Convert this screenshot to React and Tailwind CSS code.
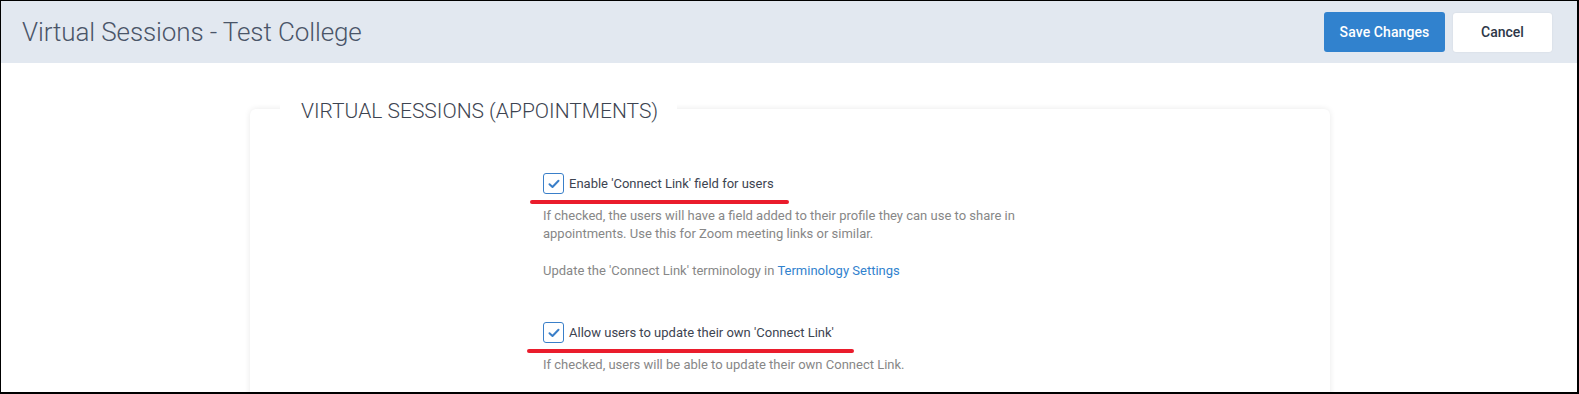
import React from 'react';

function CheckBox() {
  return (
    <span className="flex h-[21px] w-[21px] shrink-0 items-center justify-center rounded-[3px] border border-[#3a7fc9] bg-white">
      <svg width="12" height="10" viewBox="0 0 12 10" fill="none">
        <path d="M1.5 5.2 L4.5 8 L10.5 1.8" stroke="#3a7fc9" strokeWidth="2" strokeLinecap="round" strokeLinejoin="round" />
      </svg>
    </span>
  );
}

function Option({ label, markWidth, markLeft, children }) {
  return (
    <div className="relative">
      <label className="flex items-center gap-[5px] text-[13px] text-[#3d4451]">
        <CheckBox />
        <span>{label}</span>
      </label>
      {/* red review annotation */}
      <div
        className="absolute top-[27px] h-[4px] rounded-full bg-[#ea1c2c]"
        style={{ width: markWidth, left: markLeft }}
      />
      <div className="mt-[13px] w-[478px] text-[13px] leading-[18px] text-[#878787]">{children}</div>
    </div>
  );
}

export default function App() {
  return (
    <div
      className="flex h-[394px] w-[1579px] flex-col overflow-hidden border-t border-l border-r-2 border-b-2 border-black bg-white"
      style={{ fontFamily: 'Roboto, "Liberation Sans", sans-serif' }}
    >
      <header className="flex h-[62px] shrink-0 items-center justify-between bg-[#e2e8f0] pl-[21px] pr-[25px]">
        <h1 className="text-[26px] font-light tracking-[-0.1px] text-[#4a5568]">Virtual Sessions - Test College</h1>
        <div className="flex items-center gap-[8px]">
          <button className="h-[40px] w-[121px] rounded-[3px] bg-[#3182ce] text-[14px] font-medium tracking-[0.1px] text-white">
            Save Changes
          </button>
          <button className="h-[39px] w-[99px] rounded-[3px] bg-white text-[14px] font-medium text-[#2d3748] shadow-[0_0_2px_rgba(0,0,0,0.08)]">
            Cancel
          </button>
        </div>
      </header>

      <main className="flex-1 pl-[249px] pt-[46px]">
        <section className="relative h-[400px] w-[1080px] rounded-[6px] bg-white pl-[293px] pt-[64px] shadow-[0_0_6px_rgba(0,0,0,0.09)]">
          <h2 className="absolute left-[30px] top-[-10px] bg-white pl-[21px] pr-[19px] text-[21px] font-light leading-[24px] text-[#3d4451]">
            VIRTUAL SESSIONS (APPOINTMENTS)
          </h2>

          <Option label="Enable 'Connect Link' field for users" markWidth={259} markLeft={-13}>
            <p>
              If checked, the users will have a field added to their profile they can use to share in appointments. Use
              this for Zoom meeting links or similar.
            </p>
            <p className="mt-[19px]">
              Update the 'Connect Link' terminology in{' '}
              <a href="#" className="text-[#3182ce]">
                Terminology Settings
              </a>
            </p>
          </Option>

          <div className="mt-[42px]">
            <Option label="Allow users to update their own 'Connect Link'" markWidth={327} markLeft={-16}>
              <p>If checked, users will be able to update their own Connect Link.</p>
            </Option>
          </div>
        </section>
      </main>
    </div>
  );
}
